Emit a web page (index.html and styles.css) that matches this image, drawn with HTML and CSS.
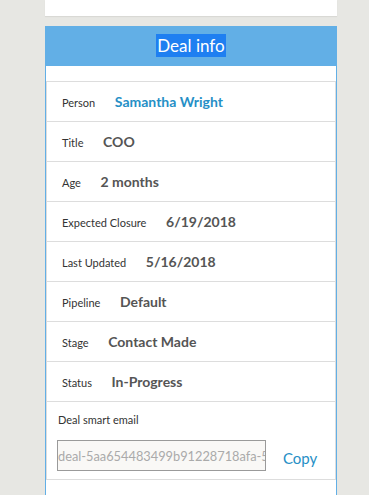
FILE: index.html
```html
<!DOCTYPE html>
<html>
<head>
  <meta charset="utf-8">
  <link rel="stylesheet" href="styles.css">
</head>
<body>
  <div class="column">
    <div class="top-card"></div>

    <div class="panel">
      <div class="panel-header">
        <span class="selected">Deal info</span>
      </div>

      <div class="panel-body">
        <div class="info-box">
          <div class="info-row">
            <span class="info-label">Person</span>
            <span class="info-value link">Samantha Wright</span>
          </div>
          <div class="info-row">
            <span class="info-label">Title</span>
            <span class="info-value">COO</span>
          </div>
          <div class="info-row">
            <span class="info-label">Age</span>
            <span class="info-value">2 months</span>
          </div>
          <div class="info-row">
            <span class="info-label">Expected Closure</span>
            <span class="info-value">6/19/2018</span>
          </div>
          <div class="info-row">
            <span class="info-label">Last Updated</span>
            <span class="info-value">5/16/2018</span>
          </div>
          <div class="info-row">
            <span class="info-label">Pipeline</span>
            <span class="info-value">Default</span>
          </div>
          <div class="info-row">
            <span class="info-label">Stage</span>
            <span class="info-value">Contact Made</span>
          </div>
          <div class="info-row">
            <span class="info-label">Status</span>
            <span class="info-value">In-Progress</span>
          </div>

          <div class="email-section">
            <div class="email-label">Deal smart email</div>
            <div class="email-row">
              <input class="email-input" type="text" readonly value="deal-5aa654483499b91228718afa-5aa654483499b9@deals.example.com">
              <a class="copy-link">Copy</a>
            </div>
          </div>
        </div>
      </div>
    </div>
  </div>
</body>
</html>
```

FILE: styles.css
```css
body {
  margin: 0;
  padding: 0;
  background: #e7e7e3;
  font-family: Lato, 'Open Sans', sans-serif;
  color: #333;
}

.column {
  width: 292px;
  margin-left: 45px;
}

.top-card {
  height: 16px;
  background: white;
  box-shadow: 0 1px 1px rgba(0,0,0,0.06);
  margin-bottom: 10px;
}

.panel {
  background: white;
  border: 1px solid #62afe6;
  border-top: none;
  min-height: 480px;
}

.panel-header {
  height: 40px;
  line-height: 40px;
  background: #62afe6;
  text-align: center;
  font-size: 17px;
  color: white;
  margin: 0 -1px;
}

.selected {
  background: #1f7ff1;
  padding: 1px 1px;
}

.panel-body {
  padding-top: 15px;
}

.info-box {
  border: 1px solid #dddddd;
}

.info-row {
  height: 39px;
  line-height: 39px;
  padding-left: 15px;
  font-size: 14px;
  border-bottom: 1px solid #dddddd;
  white-space: nowrap;
}

.info-label {
  font-size: 11px;
  color: #333;
  margin-right: 16px;
}

.info-value {
  font-weight: 700;
  color: #555;
}

.info-value.link {
  color: #268fc6;
}

.email-section {
  padding: 11px 0 8px 10px;
}

.email-label {
  font-size: 11px;
  line-height: 14px;
  color: #333;
  padding-left: 1px;
  margin-bottom: 13px;
}

.email-row {
  display: flex;
  align-items: flex-end;
}

.email-input {
  box-sizing: border-box;
  width: 209px;
  height: 31px;
  margin: 0;
  padding: 0;
  border: 1px solid #9a9a9a;
  background: #f9f8f6;
  color: #aaa;
  font-family: Lato, 'Open Sans', sans-serif;
  font-size: 12.8px;
  outline: none;
}

.copy-link {
  margin-left: 17px;
  margin-bottom: 3px;
  font-size: 15px;
  line-height: 20px;
  color: #268fc6;
  cursor: pointer;
}
```
